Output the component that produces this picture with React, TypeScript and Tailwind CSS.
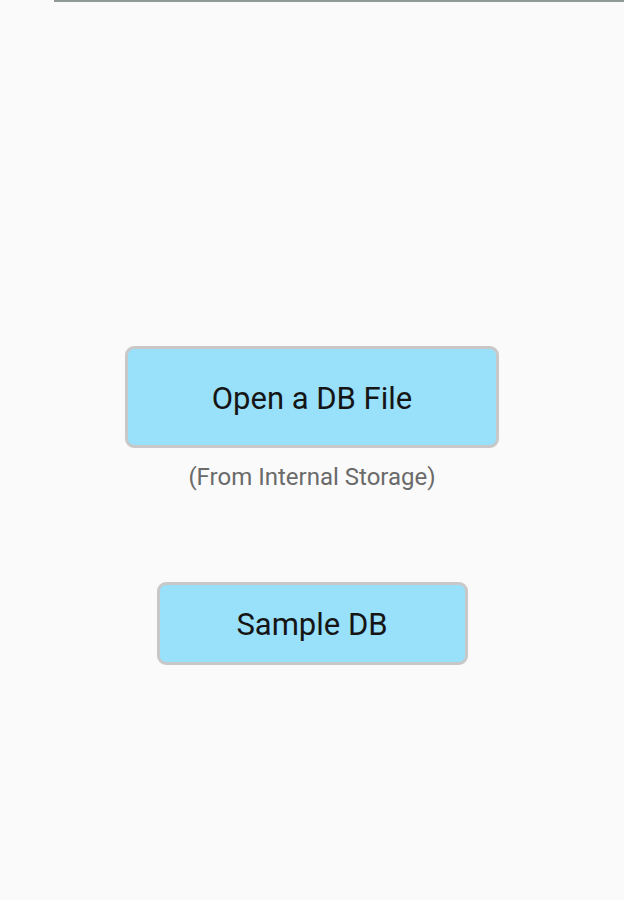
export default function App() {
  return (
    <div className="relative min-h-[900px] w-full bg-[#fafafa] font-['Roboto',sans-serif]">
      {/* thin status strip at the very top */}
      <div className="absolute left-0 top-0 h-[2px] w-full">
        <div className="ml-[54px] h-full bg-[#8f9998]"></div>
      </div>

      <div className="flex flex-col items-center pt-[346px]">
        <button className="flex h-[102px] w-[374px] items-center justify-center rounded-[9px] border-[3px] border-[#c8c8c8] bg-[#99e0fa] pt-[4px] text-[31px] text-[#151515]">
          Open a DB File
        </button>
        <p className="mt-[15px] text-[24px] leading-[28px] text-[#6a6a6a]">(From Internal Storage)</p>

        <button className="mt-[91px] flex h-[83px] w-[311px] items-center justify-center rounded-[9px] border-[3px] border-[#c8c8c8] bg-[#99e0fa] pt-[4px] text-[31px] text-[#151515]">
          Sample DB
        </button>
      </div>
    </div>
  );
}
